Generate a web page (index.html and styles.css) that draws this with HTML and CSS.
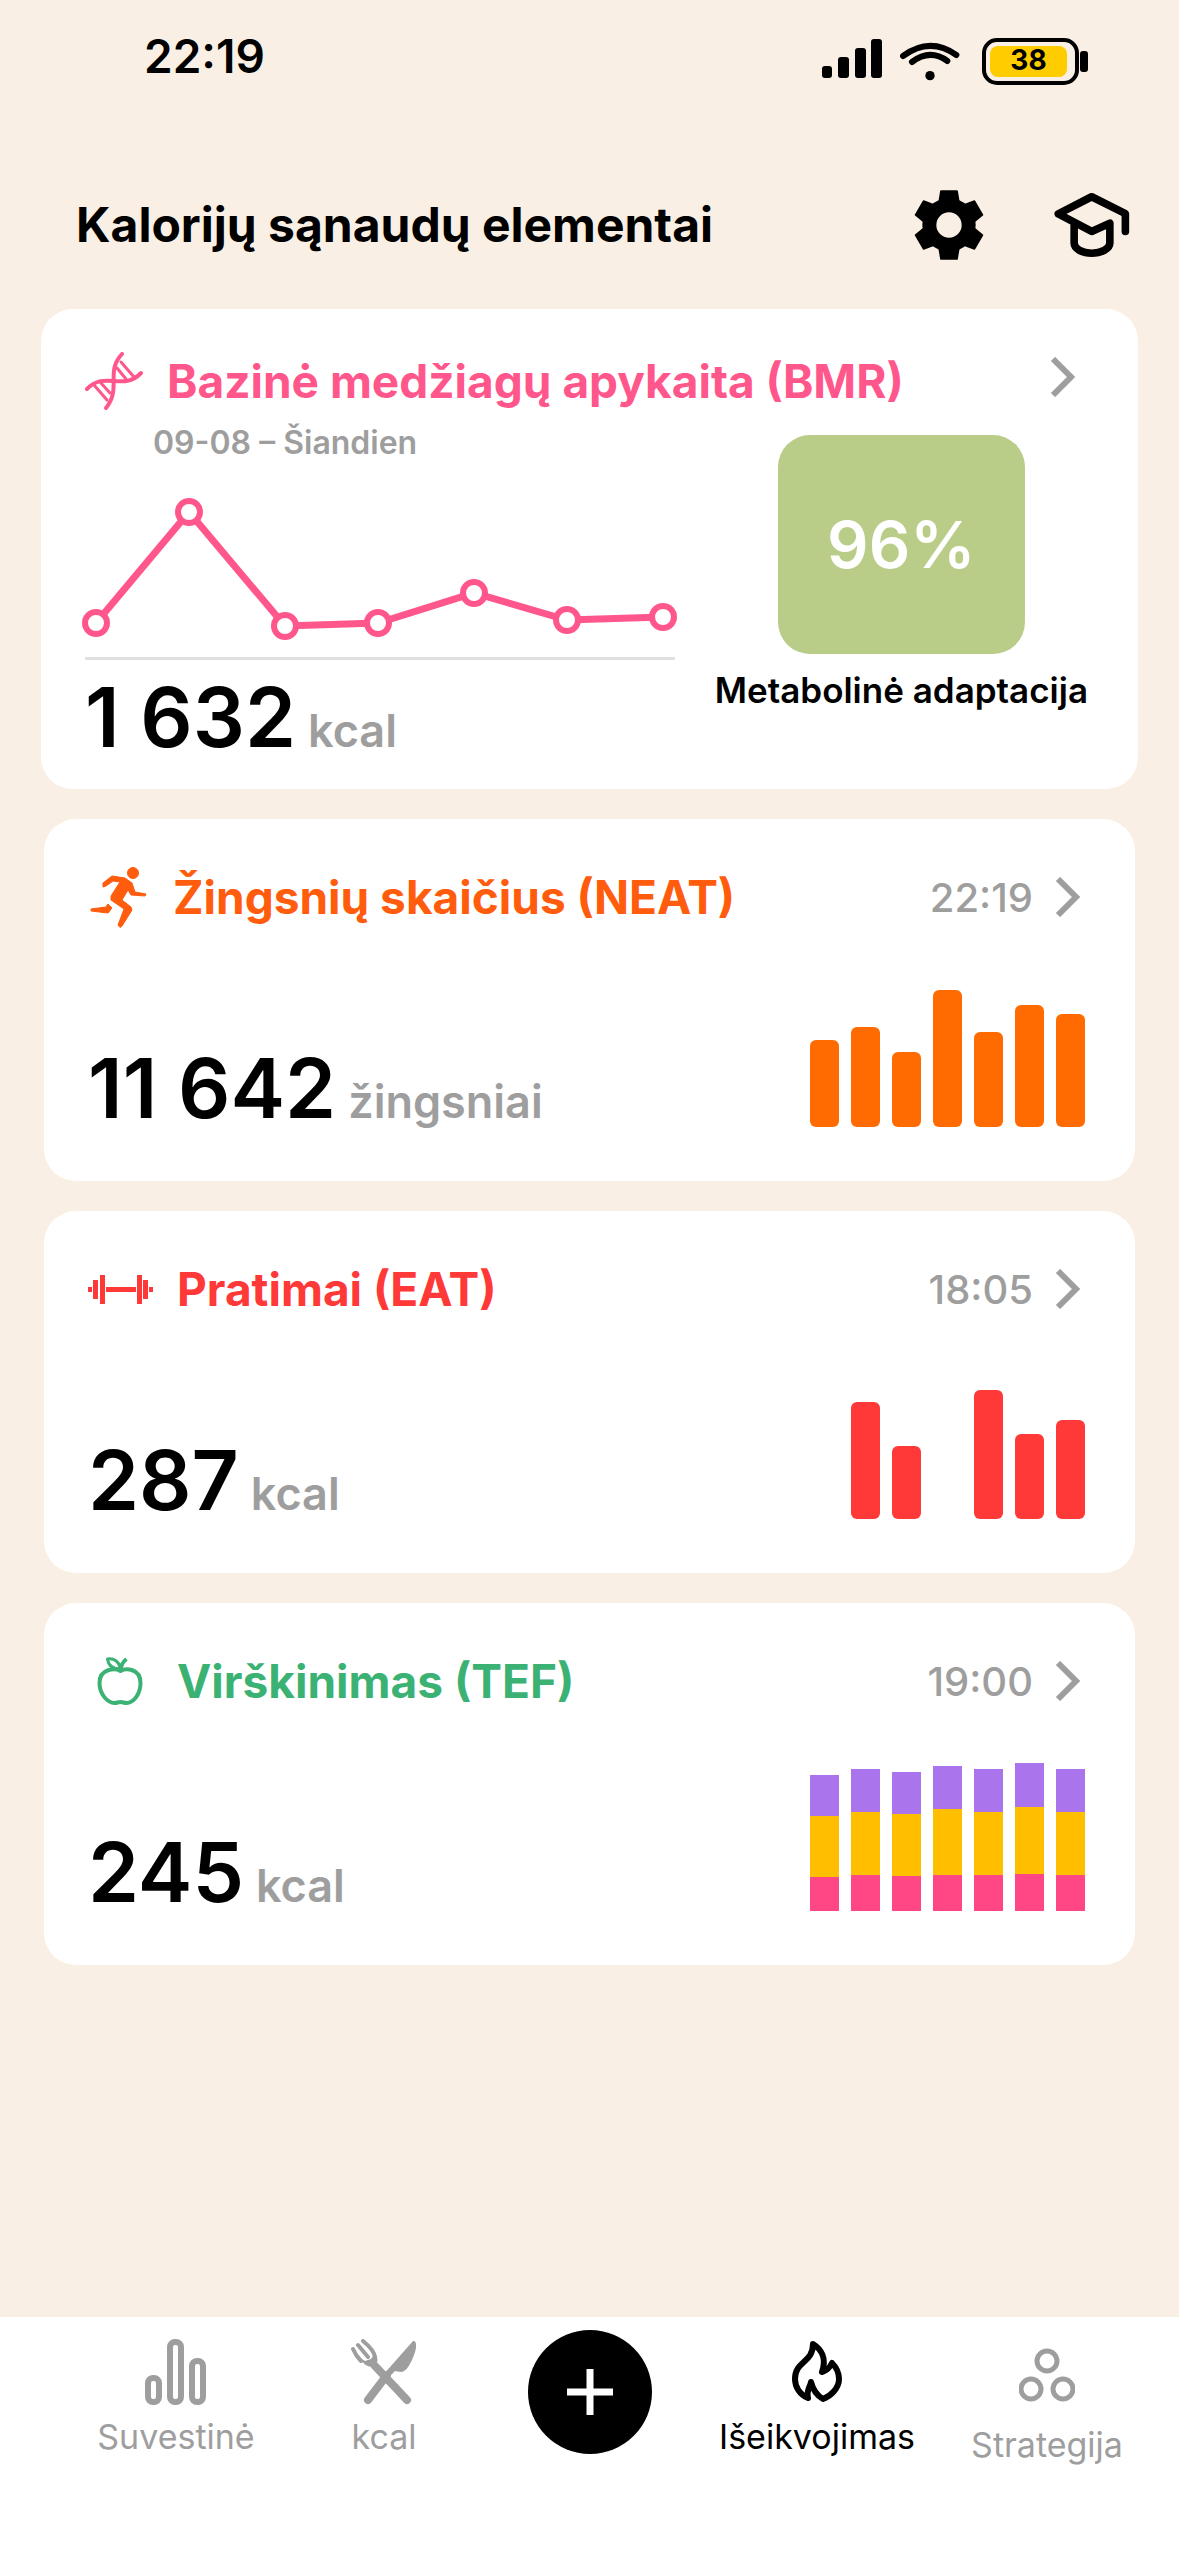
FILE: index.html
```html
<!DOCTYPE html>
<html lang="lt">
<head>
    <meta charset="UTF-8">
    <meta name="viewport" content="width=device-width, initial-scale=1.0">
    <title>Kalorijų sąnaudų elementai</title>
    <link rel="stylesheet" href="styles.css">
</head>
<body>

<div class="status-bar">
    <span class="clock">22:19</span>
    <div class="status-icons">
        <svg width="60" height="45" viewBox="0 0 60 45">
            <rect x="0" y="27" width="10" height="12" rx="3"/>
            <rect x="16" y="18" width="11" height="21" rx="3"/>
            <rect x="33" y="9" width="11" height="30" rx="3"/>
            <rect x="49" y="0" width="11" height="39" rx="3"/>
        </svg>
        <svg class="wifi" width="60" height="40" viewBox="0 0 180 120" fill="none" stroke="#000" stroke-linecap="round">
            <path d="M9 45Q90 -14 169 42" stroke-width="18"/>
            <path d="M36 63Q90 22 142 60" stroke-width="18"/>
            <circle cx="90" cy="104" r="14" fill="#000" stroke="none"/>
        </svg>
        <div class="battery"><span class="battery-level">38</span></div>
    </div>
</div>

<header>
    <h1>Kalorijų sąnaudų elementai</h1>
    <div class="header-buttons">
        <button type="button" aria-label="Nustatymai">
            <svg width="70" height="70" viewBox="-105 -105 210 210">
                <defs>
                    <path id="tooth" d="M-24 -102H24L31 -60H-31Z" stroke="#000" stroke-width="5" stroke-linejoin="round"/>
                </defs>
                <circle r="59" fill="none" stroke="#000" stroke-width="42"/>
                <use href="#tooth"/>
                <use href="#tooth" transform="rotate(60)"/>
                <use href="#tooth" transform="rotate(120)"/>
                <use href="#tooth" transform="rotate(180)"/>
                <use href="#tooth" transform="rotate(240)"/>
                <use href="#tooth" transform="rotate(300)"/>
            </svg>
        </button>
        <button type="button" aria-label="Mokymasis">
            <svg width="76" height="66" viewBox="0 0 230 199" fill="none" stroke="#000" stroke-width="23" stroke-linecap="round" stroke-linejoin="round">
                <path d="M216 119V65L114 14L13 66L114 119L169 94V154C169 172 142 185 114 185C86 185 61 172 61 154V94"/>
            </svg>
        </button>
    </div>
</header>

<main>
    <a href="#bmr" class="card card-bmr">
        <div class="card-head pink">
            <svg class="icon" width="58" height="58" viewBox="0 0 58 58" fill="none" stroke="currentColor" stroke-width="4" stroke-linecap="round">
                <path d="M37 2C20 20 37 36 21 56"/>
                <path d="M2 37C20 18 38 40 56 21"/>
                <path d="M9 33L22 48M16 31L25 41M36 10L49 25M32 16L41 27" stroke-width="3"/>
            </svg>
            <h2>Bazinė medžiagų apykaita (BMR)</h2>
            <svg class="chevron" width="26" height="40" viewBox="0 0 26 40"><path d="M3 2L21 20L3 38"/></svg>
        </div>
        <div class="bmr-body">
            <div class="bmr-chart">
                <p class="date-range">09-08 – Šiandien</p>
                <svg class="line-chart" viewBox="0 0 590 150">
                    <polyline points="11,126 104,15 200,129 293,126 389,96 482,123 578,120"/>
                    <circle cx="11" cy="126" r="11"/>
                    <circle cx="104" cy="15" r="11"/>
                    <circle cx="200" cy="129" r="11"/>
                    <circle cx="293" cy="126" r="11"/>
                    <circle cx="389" cy="96" r="11"/>
                    <circle cx="482" cy="123" r="11"/>
                    <circle cx="578" cy="120" r="11"/>
                </svg>
                <p class="value">1 632 <span>kcal</span></p>
            </div>
            <div class="adaptation">
                <div class="percent">96%</div>
                <p>Metabolinė adaptacija</p>
            </div>
        </div>
    </a>

    <a href="#neat" class="card">
        <div class="card-head orange">
            <svg class="icon" width="61" height="61" viewBox="0 0 57 61" fill="currentColor" stroke="currentColor" stroke-linejoin="round">
                <circle cx="43" cy="6" r="5.5"/>
                <path d="M22 9L13 16V20L16 19L23 14L30 15L21 29V33L34 42L28 58L30 60.500L32 59L42 43L41 40L32 33L38 23L41 28L55 29L56 27L45 25L42 16L35 11Z"/>
                <path d="M18 37L16 40L1 42V44L18 46L22 41Z"/>
            </svg>
            <h2>Žingsnių skaičius (NEAT)</h2>
            <time>22:19</time>
            <svg class="chevron" width="26" height="40" viewBox="0 0 26 40"><path d="M3 2L21 20L3 38"/></svg>
        </div>
        <div class="card-body">
            <p class="value">11 642 <span>žingsniai</span></p>
            <div class="bars orange">
                <i style="height: 87px"></i>
                <i style="height: 100px"></i>
                <i style="height: 75px"></i>
                <i style="height: 137px"></i>
                <i style="height: 95px"></i>
                <i style="height: 122px"></i>
                <i style="height: 113px"></i>
            </div>
        </div>
    </a>

    <a href="#eat" class="card">
        <div class="card-head red">
            <svg class="icon" width="65" height="29" viewBox="0 0 65 29" fill="currentColor">
                <path d="M0 12H4V17H0ZM5 5H10V24H5ZM12 0H17V29H12ZM18 12H48V17H18ZM49 0H54V29H49ZM55 5H60V24H55ZM61 12H65V17H61Z"/>
            </svg>
            <h2>Pratimai (EAT)</h2>
            <time>18:05</time>
            <svg class="chevron" width="26" height="40" viewBox="0 0 26 40"><path d="M3 2L21 20L3 38"/></svg>
        </div>
        <div class="card-body">
            <p class="value">287 <span>kcal</span></p>
            <div class="bars red">
                <i style="height: 0"></i>
                <i style="height: 117px"></i>
                <i style="height: 73px"></i>
                <i style="height: 0"></i>
                <i style="height: 129px"></i>
                <i style="height: 85px"></i>
                <i style="height: 99px"></i>
            </div>
        </div>
    </a>

    <a href="#tef" class="card">
        <div class="card-head green">
            <svg class="icon" width="65" height="49" viewBox="0 0 46 49" fill="none" stroke="currentColor" stroke-width="4" stroke-linejoin="round">
                <path d="M23 14C18 11 2 11 2 26C2 37 10 46 17 46C20 46 20 45 23 45C26 45 26 46 29 46C36 46 43 37 43 26C43 11 28 11 23 14Z"/>
                <path d="M10 2C17 1 22 5 23 12C16 12 11 9 10 2Z" stroke-width="3"/>
                <path d="M23 15C23 9 25 5 29 2"/>
            </svg>
            <h2>Virškinimas (TEF)</h2>
            <time>19:00</time>
            <svg class="chevron" width="26" height="40" viewBox="0 0 26 40"><path d="M3 2L21 20L3 38"/></svg>
        </div>
        <div class="card-body">
            <p class="value">245 <span>kcal</span></p>
            <div class="bars stacked">
                <i style="height: 136px"></i>
                <i style="height: 142px"></i>
                <i style="height: 139px"></i>
                <i style="height: 145px"></i>
                <i style="height: 142px"></i>
                <i style="height: 148px"></i>
                <i style="height: 142px"></i>
            </div>
        </div>
    </a>
</main>

<nav>
    <a href="#suvestine">
        <svg width="62" height="66" viewBox="0 0 62 66" fill="none" stroke="currentColor" stroke-width="6">
            <rect x="3" y="39" width="11" height="24" rx="5"/>
            <rect x="25" y="3" width="11" height="60" rx="5"/>
            <rect x="47" y="22" width="11" height="41" rx="5"/>
        </svg>
        Suvestinė
    </a>
    <a href="#kcal">
        <svg width="66" height="66" viewBox="0 0 66 66" fill="none" stroke="currentColor" stroke-linecap="round">
            <path d="M36 36L17 61M24 27L56 61" stroke-width="8"/>
            <path d="M62 2C66 1 66 9 63 16C60 24 56 31 53 32C50 34 46 32 44 32L36 40L32 36Z" fill="currentColor" stroke="none"/>
            <path d="M2 10Q5 17 10 22M7 6L17 18M12 2Q23 11 24 18" stroke-width="4"/>
            <path d="M9 19C12 24 15 28 22 28C27 26 28 20 24 14L20 20L14 22Z" fill="currentColor" stroke="none"/>
        </svg>
        kcal
    </a>
    <button type="button" class="add" aria-label="Pridėti">
        <svg width="46" height="46" viewBox="0 0 46 46"><path d="M23 0V46M0 23H46" stroke="#fff" stroke-width="7"/></svg>
    </button>
    <a href="#iseikvojimas" class="active">
        <svg width="50" height="66" viewBox="0 -2 50 66" fill="none" stroke="currentColor" stroke-width="6" stroke-linejoin="round">
            <path d="M21 3C29 8 35 17 30 31C34 30 38 26 40 22C45 27 47 33 47 38C47 47 39 55 31 58C24 54 21 49 19 41C18 46 14 50 16 57C8 54 3 46 3 38C3 20 21 22 21 3Z"/>
        </svg>
        Išeikvojimas
    </a>
    <a href="#strategija" class="lower">
        <svg width="56" height="66" viewBox="0 0 56 66" fill="none" stroke="currentColor" stroke-width="5">
            <circle cx="28" cy="14" r="10"/>
            <circle cx="12" cy="42" r="10"/>
            <circle cx="44" cy="42" r="10"/>
        </svg>
        Strategija
    </a>
</nav>

</body>
</html>
```
FILE: styles.css
```css
* {
    box-sizing: border-box;
}
body {
    font-family: Inter, "Liberation Sans", sans-serif;
    background-color: #faefe4;
    color: black;
    margin: 0;
    min-height: 100vh;
    display: flex;
    flex-direction: column;
}
h1, h2, p {
    margin: 0;
}
a {
    color: inherit;
    text-decoration: none;
}
button {
    border: none;
    padding: 0;
    background: none;
    cursor: pointer;
}
svg {
    display: block;
    flex: none;
}

.status-bar {
    display: flex;
    justify-content: space-between;
    padding: 28px 91px 0 144px;
    height: 160px;
}
.clock {
    font-size: 46px;
    line-height: 56px;
    font-weight: 600;
}
.status-icons {
    display: flex;
    height: 66px;
    align-items: center;
    gap: 18px;
}
.battery {
    position: relative;
    width: 97px;
    height: 47px;
    margin: 0 9px 0 4px;
    padding: 4px;
    border: 4px solid black;
    border-radius: 15px;
}
/* battery tip */
.battery::after {
    content: "";
    position: absolute;
    right: -13px;
    top: 9px;
    width: 8px;
    height: 21px;
    border-radius: 3px;
    background-color: black;
}
.battery-level {
    display: block;
    width: 77px;
    height: 31px;
    border-radius: 8px;
    background-color: #ffcc00;
    font-size: 28px;
    line-height: 28px;
    font-weight: 700;
    text-align: center;
}

header {
    display: flex;
    align-items: center;
    justify-content: space-between;
    height: 149px;
    padding: 0 49px 20px 76px;
}
h1 {
    font-size: 48px;
    line-height: 56px;
    font-weight: 700;
}
.header-buttons {
    display: flex;
    align-items: center;
    gap: 70px;
}

main {
    flex: 1;
    display: flex;
    flex-direction: column;
    gap: 30px;
    padding: 0 44px 30px;
}
.card {
    display: flex;
    flex-direction: column;
    min-height: 362px;
    padding: 44px 50px 46px 44px;
    border-radius: 32px;
    background-color: white;
}
.card-bmr {
    min-height: 480px;
    margin: 0 -3px;
    padding: 38px 50px 20px 44px;
}
.card-head {
    display: flex;
    align-items: center;
    height: 68px;
}
.icon {
    margin-right: 24px;
}
h2 {
    flex: 1;
    font-size: 46px;
    line-height: 56px;
    font-weight: 700;
}
time {
    color: #9e9e9e;
    font-size: 40px;
    font-weight: 500;
}
.chevron {
    margin: 0 4px 0 22px;
    fill: none;
    stroke: #9e9e9e;
    stroke-width: 6;
}
.card-bmr .chevron {
    align-self: flex-start;
    margin: 10px 12px 0 0;
}
.pink {
    color: #ff578c;
}
.orange {
    color: #ff5c0d;
}
.red {
    color: #ff3838;
}
.green {
    color: #3bb273;
}

.card-body {
    flex: 1;
    display: flex;
    align-items: flex-end;
    justify-content: space-between;
}
.value {
    display: flex;
    align-items: baseline;
    gap: 12px;
    font-size: 82px;
    line-height: 88px;
    font-weight: 600;
}
.value span {
    color: #9e9e9e;
    font-size: 45px;
    line-height: 56px;
}
.card-body .value {
    margin-bottom: 2px;
}

.bars {
    display: flex;
    align-items: flex-end;
    gap: 12px;
    height: 148px;
    margin-bottom: 8px;
}
.bars i {
    width: 29px;
    border-radius: 6px;
    background-color: currentColor;
}
.bars.orange {
    color: #ff6b00;
}
/* carbs, fat and protein shares */
.stacked i {
    border-radius: 0;
    background: linear-gradient(#aa75ec 30%, #ffbe00 30% 75%, #ff4785 75%);
}

.bmr-body {
    display: flex;
    justify-content: space-between;
}
.bmr-chart {
    width: 590px;
}
.date-range {
    padding: 8px 0 34px 68px;
    color: #9e9e9e;
    font-size: 32px;
    line-height: 40px;
    font-weight: 600;
}
.line-chart {
    width: 590px;
    height: 150px;
    overflow: visible;
    fill: none;
    stroke: #ff578c;
    stroke-width: 7;
}
.line-chart circle {
    fill: white;
    stroke-width: 6;
}
.line-chart + .value {
    margin-top: 10px;
    padding-top: 14px;
    border-top: 3px solid #e0e0e0;
}
.adaptation {
    display: flex;
    flex-direction: column;
    align-items: center;
    padding-top: 20px;
    font-size: 35px;
    line-height: 44px;
    font-weight: 600;
}
.percent {
    display: flex;
    align-items: center;
    justify-content: center;
    width: 247px;
    height: 219px;
    margin-bottom: 14px;
    border-radius: 32px;
    background-color: #b9cd89;
    color: white;
    font-size: 65px;
}

nav {
    display: grid;
    grid-template-columns: 208fr 208fr 204fr 250fr 210fr;
    align-items: start;
    justify-items: center;
    height: 239px;
    padding: 13px 27px 0 72px;
    background-color: white;
}
nav a {
    display: flex;
    flex-direction: column;
    align-items: center;
    gap: 12px;
    padding-top: 9px;
    color: #9e9e9e;
    font-size: 34px;
    line-height: 40px;
}
nav .active {
    color: black;
}
nav .lower {
    padding-top: 17px;
}
.add {
    display: flex;
    align-items: center;
    justify-content: center;
    width: 124px;
    height: 124px;
    border-radius: 50%;
    background-color: black;
}
```
